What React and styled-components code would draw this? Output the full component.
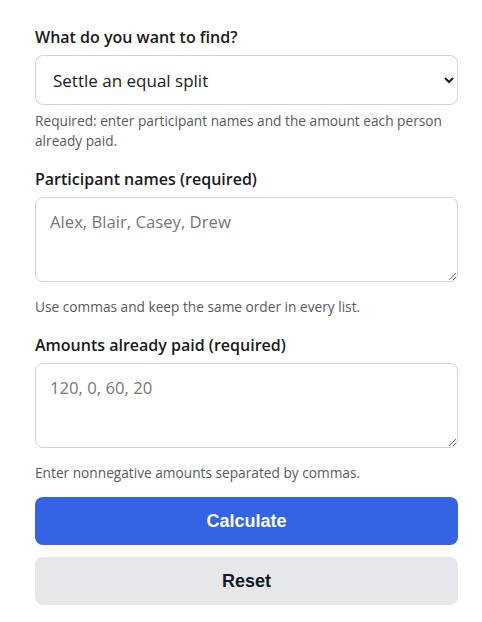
import React from "react";
import styled, { createGlobalStyle } from "styled-components";

const Global = createGlobalStyle`
  html, body { margin: 0; padding: 0; background: #ffffff; }
  body { font-family: "Open Sans", "Noto Sans", sans-serif; color: #1f2328; }
`;

const Form = styled.form`
  display: flex;
  flex-direction: column;
  padding: 26px 24px 18px 35px;
`;

const Field = styled.div`
  display: flex;
  flex-direction: column;
  margin-bottom: ${(p) => p.$mb || 17}px;
`;

const Label = styled.label`
  font-size: 16px;
  font-weight: 600;
  line-height: 22px;
  color: #1a1a1a;
  margin-bottom: 7px;
`;

const Select = styled.select`
  height: 50px;
  border: 1px solid #d1d5db;
  border-radius: 8px;
  background: #fff;
  padding: 0 12px 0 13px;
  font-family: "Open Sans", "Noto Sans", sans-serif;
  font-size: 17px;
  color: #1a1a1a;
`;

const TextArea = styled.textarea`
  height: 85px;
  box-sizing: border-box;
  border: 1px solid #d1d5db;
  border-radius: 8px;
  padding: 12px 14px;
  font-family: "Open Sans", "Noto Sans", sans-serif;
  font-size: 16.7px;
  line-height: 24px;
  color: #1a1a1a;
  resize: vertical;
  &::placeholder { color: #777777; }
`;

const Hint = styled.p`
  margin: ${(p) => p.$gap || 6}px 0 0;
  font-size: 13.7px;
  line-height: 20px;
  color: #5a5a5a;
`;

const Button = styled.button`
  height: 48px;
  border: none;
  border-radius: 8px;
  font-family: "Liberation Sans", Arial, sans-serif;
  font-size: 18px;
  font-weight: 700;
  background: ${(p) => (p.$primary ? "#3464e4" : "#e5e7eb")};
  color: ${(p) => (p.$primary ? "#ffffff" : "#111827")};
  margin-bottom: 12px;
  cursor: pointer;
`;

export default function App() {
  return (
    <>
      <Global />
      <Form onSubmit={(e) => e.preventDefault()}>
        <Field>
          <Label htmlFor="goal">What do you want to find?</Label>
          <Select id="goal" defaultValue="settle">
            <option value="settle">Settle an equal split</option>
          </Select>
          <Hint>Required: enter participant names and the amount each person already paid.</Hint>
        </Field>
        <Field>
          <Label htmlFor="names">Participant names (required)</Label>
          <TextArea id="names" placeholder="Alex, Blair, Casey, Drew" />
          <Hint $gap={15}>Use commas and keep the same order in every list.</Hint>
        </Field>
        <Field $mb={14}>
          <Label htmlFor="amounts">Amounts already paid (required)</Label>
          <TextArea id="amounts" placeholder="120, 0, 60, 20" />
          <Hint $gap={15}>Enter nonnegative amounts separated by commas.</Hint>
        </Field>
        <Button type="submit" $primary>Calculate</Button>
        <Button type="reset">Reset</Button>
      </Form>
    </>
  );
}
